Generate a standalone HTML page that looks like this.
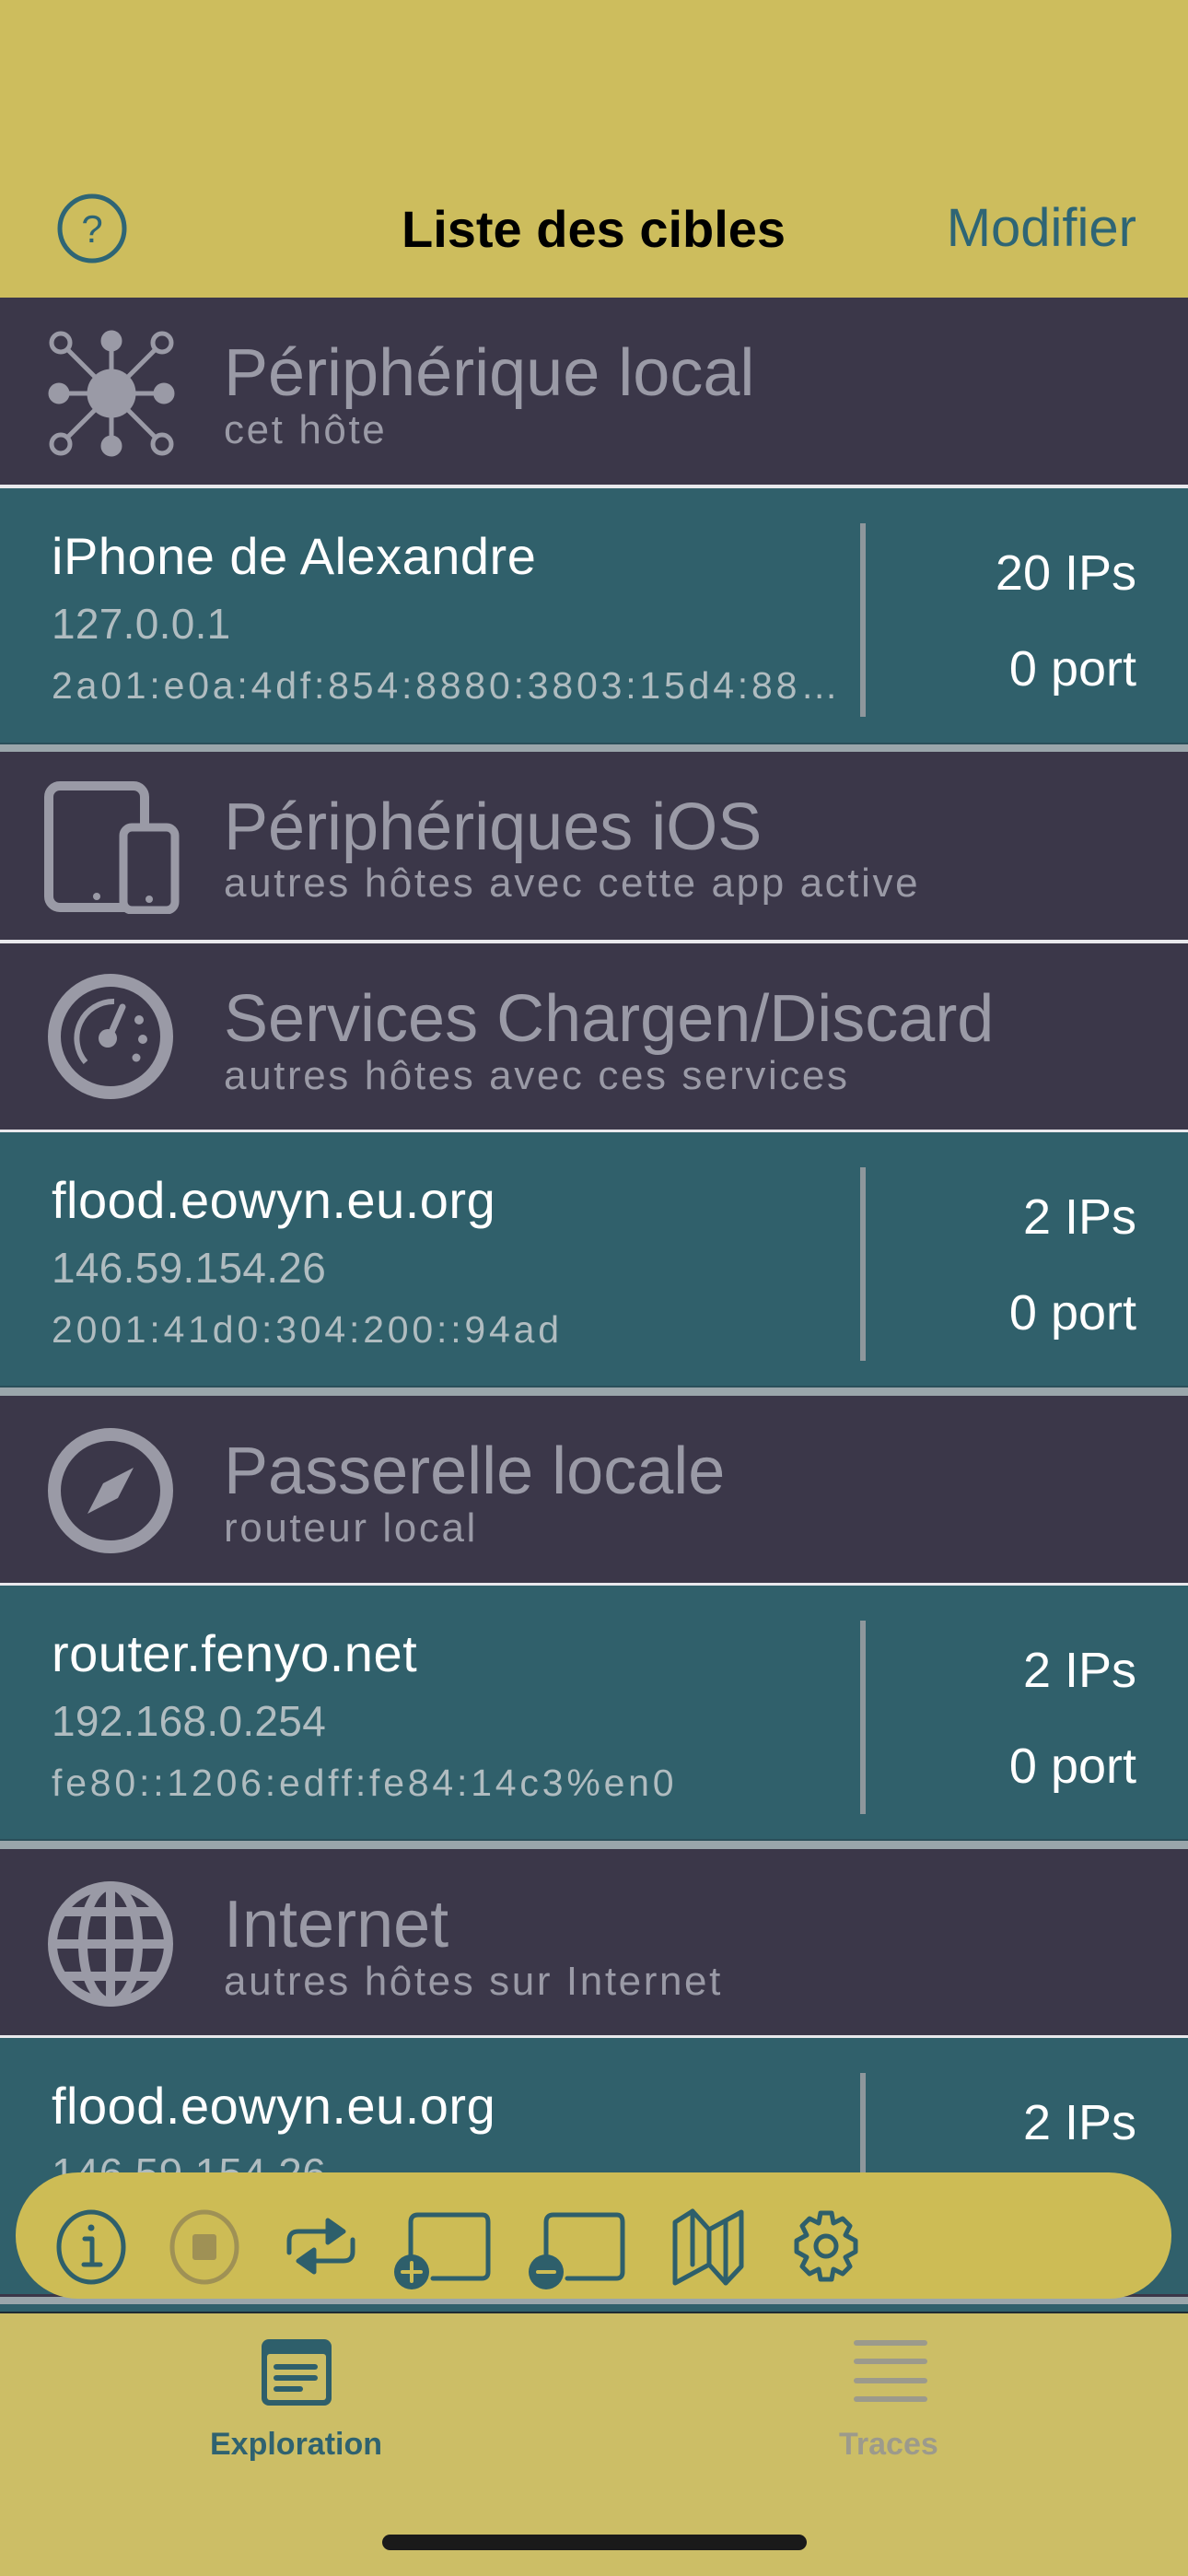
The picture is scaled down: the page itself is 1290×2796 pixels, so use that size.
<!DOCTYPE html>
<html><head><meta charset="utf-8">
<style>
*{margin:0;padding:0;box-sizing:border-box}
body{width:1290px;height:2796px;position:relative;overflow:hidden;background:#3b3749;font-family:"Liberation Sans",sans-serif}
.a{position:absolute;white-space:nowrap;line-height:1}
.y{background:#cdbd5d}
.dk{background:#3b3749}
.tl{background:#30606b}
.wl{background:#e8e8ec}
.gl{background:#9aa6ab}
.st{color:#9a9aa6;font-size:72px}
.ss{color:#9a9aa6;font-size:44px;letter-spacing:2.6px}
.nm{color:#fff;font-size:56px;letter-spacing:0.5px}
.ip{color:#b0bcc0;font-size:46px;letter-spacing:0.3px}
.v6{color:#b0bcc0;font-size:41px;letter-spacing:3.8px}
.rv{color:#fff;font-size:54px;right:56px;text-align:right}
.sep{position:absolute;left:934px;width:6px;background:#8e979c}
</style></head><body>
<div class="a y" style="left:0;top:0;width:1290px;height:323px"></div>
<svg class="a" style="left:60px;top:208px" width="80" height="80" viewBox="0 0 80 80"><circle cx="40" cy="40" r="35" fill="none" stroke="#2e6575" stroke-width="5"/><text x="40" y="55" text-anchor="middle" font-family="Liberation Sans" font-size="42" fill="#2e6575">?</text></svg>
<div class="a" style="left:436px;top:221px;font-size:56px;font-weight:bold;color:#000">Liste des cibles</div>
<div class="a" style="right:56px;top:219px;font-size:58px;color:#2e6575">Modifier</div>

<div class="a dk" style="left:0;top:323px;width:1290px;height:203px"></div>
<div class="a wl" style="left:0;top:526px;width:1290px;height:4px"></div>
<div class="a tl" style="left:0;top:530px;width:1290px;height:276px"></div>
<div class="a" style="left:0;top:806px;width:1290px;height:2px;background:#2a4f5a"></div>
<div class="a gl" style="left:0;top:808px;width:1290px;height:8px"></div>
<div class="a dk" style="left:0;top:816px;width:1290px;height:204px"></div>
<div class="a wl" style="left:0;top:1020px;width:1290px;height:4px"></div>
<div class="a dk" style="left:0;top:1024px;width:1290px;height:202px"></div>
<div class="a wl" style="left:0;top:1226px;width:1290px;height:3px"></div>
<div class="a tl" style="left:0;top:1229px;width:1290px;height:275px"></div>
<div class="a" style="left:0;top:1504px;width:1290px;height:2px;background:#2a4f5a"></div>
<div class="a gl" style="left:0;top:1506px;width:1290px;height:9px"></div>
<div class="a dk" style="left:0;top:1515px;width:1290px;height:203px"></div>
<div class="a wl" style="left:0;top:1718px;width:1290px;height:3px"></div>
<div class="a tl" style="left:0;top:1721px;width:1290px;height:275px"></div>
<div class="a" style="left:0;top:1996px;width:1290px;height:2px;background:#2a4f5a"></div>
<div class="a gl" style="left:0;top:1998px;width:1290px;height:9px"></div>
<div class="a dk" style="left:0;top:2007px;width:1290px;height:202px"></div>
<div class="a wl" style="left:0;top:2209px;width:1290px;height:3px"></div>
<div class="a tl" style="left:0;top:2212px;width:1290px;height:290px"></div>

<svg class="a" style="left:46px;top:352px" width="150" height="150" viewBox="0 0 150 150" fill="#9a9aa6" stroke="#9a9aa6">
<g stroke-width="5"><line x1="75" y1="75" x2="75" y2="15"/><line x1="75" y1="75" x2="75" y2="135"/><line x1="75" y1="75" x2="15" y2="75"/><line x1="75" y1="75" x2="135" y2="75"/><line x1="75" y1="75" x2="25" y2="25"/><line x1="75" y1="75" x2="125" y2="25"/><line x1="75" y1="75" x2="25" y2="125"/><line x1="75" y1="75" x2="125" y2="125"/></g>
<circle cx="75" cy="75" r="26"/><circle cx="75" cy="18" r="11"/><circle cx="75" cy="132" r="11"/><circle cx="18" cy="75" r="11"/><circle cx="132" cy="75" r="11"/>
<g fill="#3b3749" stroke-width="5"><circle cx="20" cy="20" r="10"/><circle cx="130" cy="20" r="10"/><circle cx="20" cy="130" r="10"/><circle cx="130" cy="130" r="10"/></g></svg>
<div class="a st" style="left:243px;top:369px">Périphérique local</div>
<div class="a ss" style="left:243px;top:445px">cet hôte</div>

<div class="a nm" style="left:56px;top:576px">iPhone de Alexandre</div>
<div class="a ip" style="left:56px;top:654px">127.0.0.1</div>
<div class="a v6" style="left:56px;top:724px">2a01:e0a:4df:854:8880:3803:15d4:88…</div>
<div class="sep" style="top:568px;height:210px"></div>
<div class="a rv" style="top:595px">20 IPs</div>
<div class="a rv" style="top:699px">0 port</div>

<svg class="a" style="left:46px;top:846px" width="150" height="146" viewBox="0 0 150 146" fill="none" stroke="#9a9aa6">
<rect x="7" y="7" width="104" height="132" rx="12" stroke-width="10"/>
<rect x="88" y="52" width="56" height="90" rx="9" fill="#3b3749" stroke-width="9"/>
<circle cx="59" cy="127" r="4" fill="#9a9aa6" stroke="none"/><circle cx="116" cy="130" r="4" fill="#9a9aa6" stroke="none"/></svg>
<div class="a st" style="left:243px;top:862px">Périphériques iOS</div>
<div class="a ss" style="left:243px;top:937px">autres hôtes avec cette app active</div>

<svg class="a" style="left:50px;top:1055px" width="140" height="140" viewBox="0 0 140 140" fill="none" stroke="#9a9aa6">
<circle cx="70" cy="70" r="61" stroke-width="14"/>
<path d="M74 32 A40 40 0 0 0 43 98" stroke-width="6"/>
<path d="M83 38 L69 70" stroke-width="7" stroke-linecap="round"/>
<circle cx="67" cy="72" r="10" fill="#9a9aa6" stroke="none"/>
<g fill="#9a9aa6" stroke="none"><circle cx="101" cy="52" r="5"/><circle cx="105" cy="73" r="5"/><circle cx="98" cy="93" r="4.5"/></g></svg>
<div class="a st" style="left:243px;top:1070px">Services Chargen/Discard</div>
<div class="a ss" style="left:243px;top:1146px">autres hôtes avec ces services</div>

<div class="a nm" style="left:56px;top:1275px">flood.eowyn.eu.org</div>
<div class="a ip" style="left:56px;top:1353px">146.59.154.26</div>
<div class="a v6" style="left:56px;top:1423px">2001:41d0:304:200::94ad</div>
<div class="sep" style="top:1267px;height:210px"></div>
<div class="a rv" style="top:1294px">2 IPs</div>
<div class="a rv" style="top:1398px">0 port</div>

<svg class="a" style="left:50px;top:1548px" width="140" height="140" viewBox="0 0 140 140" fill="none" stroke="#9a9aa6">
<circle cx="70" cy="70" r="61" stroke-width="14"/>
<path d="M95 45 L78 78 L45 95 L62 62 Z" fill="#9a9aa6" stroke="none"/></svg>
<div class="a st" style="left:243px;top:1561px">Passerelle locale</div>
<div class="a ss" style="left:243px;top:1637px">routeur local</div>

<div class="a nm" style="left:56px;top:1767px">router.fenyo.net</div>
<div class="a ip" style="left:56px;top:1845px">192.168.0.254</div>
<div class="a v6" style="left:56px;top:1915px">fe80::1206:edff:fe84:14c3%en0</div>
<div class="sep" style="top:1759px;height:210px"></div>
<div class="a rv" style="top:1786px">2 IPs</div>
<div class="a rv" style="top:1890px">0 port</div>

<svg class="a" style="left:50px;top:2040px" width="140" height="140" viewBox="0 0 140 140" fill="none" stroke="#9a9aa6" stroke-width="10">
<circle cx="70" cy="70" r="63"/>
<ellipse cx="70" cy="70" rx="30" ry="63"/>
<line x1="70" y1="5" x2="70" y2="135"/><line x1="6" y1="70" x2="134" y2="70"/>
<line x1="16" y1="35" x2="124" y2="35"/><line x1="16" y1="105" x2="124" y2="105"/></svg>
<div class="a st" style="left:243px;top:2053px">Internet</div>
<div class="a ss" style="left:243px;top:2129px">autres hôtes sur Internet</div>

<div class="a nm" style="left:56px;top:2258px">flood.eowyn.eu.org</div>
<div class="a ip" style="left:56px;top:2336px">146.59.154.26</div>
<div class="sep" style="top:2250px;height:140px"></div>
<div class="a rv" style="top:2277px">2 IPs</div>

<div class="a" style="left:0;top:2490px;width:1290px;height:8px;background:#3b3749"></div>
<div class="a gl" style="left:0;top:2493px;width:1290px;height:8px"></div>
<div class="a tl" style="left:0;top:2501px;width:1290px;height:9px"></div>
<div class="a" style="left:0;top:2509px;width:1290px;height:2px;background:#1e2c33"></div>
<div class="a" style="left:17px;top:2358px;width:1255px;height:137px;border-radius:68px;background:#cdbc55"></div>
<svg class="a" style="left:0;top:2390px" width="960" height="100" viewBox="0 2390 960 100" fill="none" stroke="#2e5f6b" stroke-width="5" stroke-linecap="round" stroke-linejoin="round">
<ellipse cx="99" cy="2439" rx="35" ry="38"/>
<circle cx="99" cy="2418" r="3.5" fill="#2e5f6b" stroke="none"/>
<path d="M92 2430 H100 V2458 M91 2458 H109"/>
<ellipse cx="222" cy="2439" rx="35" ry="38" stroke="#9f9155"/>
<rect x="209" y="2425" width="26" height="28" rx="3" fill="#9f9155" stroke="none"/>
<path d="M314 2445 V2432 Q314 2422 324 2422 H358"/>
<path d="M356 2410 L373 2422 L356 2434 Z" fill="#2e5f6b"/>
<path d="M383 2431 V2444 Q383 2454 373 2454 H339"/>
<path d="M341 2442 L324 2454 L341 2466 Z" fill="#2e5f6b"/>
<path d="M446 2447 V2412 Q446 2404 454 2404 H524 Q530 2404 530 2412 V2466 Q530 2473 523 2473 H470"/>
<circle cx="447" cy="2466" r="19" fill="#2e5f6b" stroke="none"/>
<path d="M447 2456 V2476 M437 2466 H457" stroke="#cdbc55" stroke-width="4"/>
<path d="M593 2447 V2412 Q593 2404 601 2404 H670 Q676 2404 676 2412 V2466 Q676 2473 669 2473 H616"/>
<circle cx="593" cy="2466" r="19" fill="#2e5f6b" stroke="none"/>
<path d="M584 2466 H602" stroke="#cdbc55" stroke-width="4"/>
<path d="M733 2412 L752 2400 L770 2420 L805 2401 V2460 L788 2478 L770 2458 L733 2478 Z"/>
<path d="M752 2400 V2458 M770 2420 V2458 M788 2412 V2478"/>
<circle cx="897" cy="2438" r="11"/>
<path d="M891 2402 H903 L905 2413 L915 2408 L923 2416 L918 2426 L929 2432 V2444 L918 2450 L923 2460 L915 2468 L905 2463 L903 2474 H891 L889 2463 L879 2468 L871 2460 L876 2450 L865 2444 V2432 L876 2426 L871 2416 L879 2408 L889 2413 Z"/>
</svg>

<div class="a" style="left:0;top:2511px;width:1290px;height:285px;background:#ccbe66"></div>
<svg class="a" style="left:282px;top:2537px" width="80" height="76" viewBox="0 0 80 76">
<rect x="2" y="2" width="76" height="72" rx="8" fill="#2e5f6b"/>
<rect x="8" y="18" width="64" height="50" rx="3" fill="#ccbe66"/>
<g stroke="#2e5f6b" stroke-width="6" stroke-linecap="round"><line x1="18" y1="32" x2="60" y2="32"/><line x1="18" y1="44" x2="60" y2="44"/><line x1="18" y1="56" x2="44" y2="56"/></g></svg>
<div class="a" style="left:228px;top:2636px;font-size:34px;font-weight:bold;color:#2f6270">Exploration</div>
<svg class="a" style="left:926px;top:2538px" width="82" height="72" viewBox="0 0 82 72"><g stroke="#9c9a8c" stroke-width="6" stroke-linecap="round"><line x1="4" y1="5" x2="78" y2="5"/><line x1="4" y1="25" x2="78" y2="25"/><line x1="4" y1="46" x2="78" y2="46"/><line x1="4" y1="66" x2="78" y2="66"/></g></svg>
<div class="a" style="left:911px;top:2636px;font-size:34px;font-weight:bold;color:#9c9a8c">Traces</div>
<div class="a" style="left:415px;top:2751px;width:461px;height:17px;border-radius:9px;background:#1a1a1a"></div>
</body></html>
